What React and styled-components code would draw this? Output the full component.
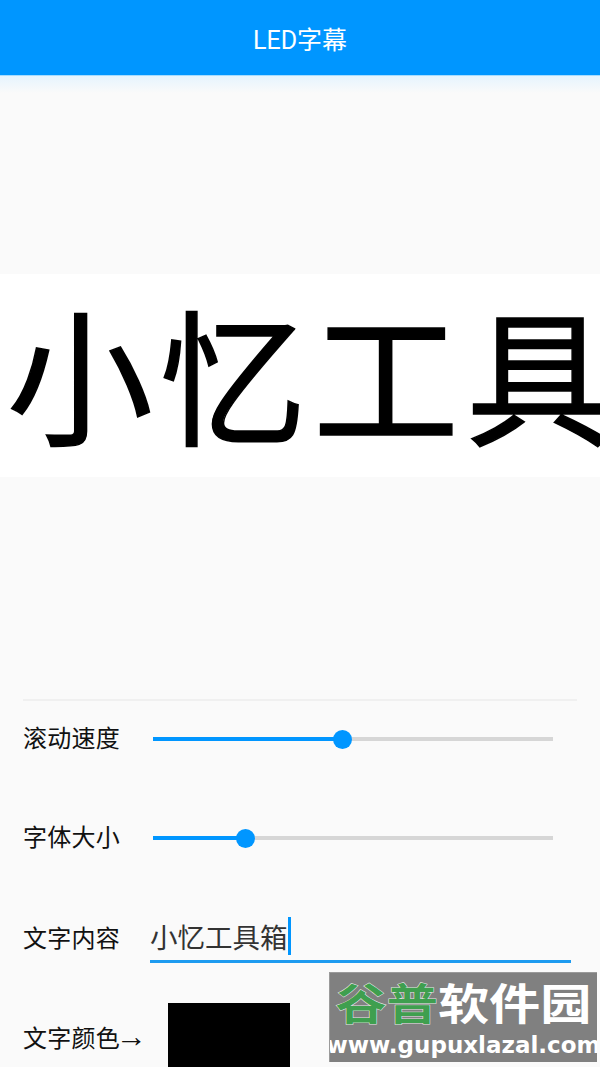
import React from 'react';
import styled, { createGlobalStyle } from 'styled-components';

const CJK = `"Noto Sans CJK SC", "Noto Sans", sans-serif`;
const BLUE = '#0096ff';

const GlobalStyle = createGlobalStyle`
  html, body {
    margin: 0;
    padding: 0;
    background: #fafafa;
  }
  * {
    box-sizing: border-box;
  }
`;

const Page = styled.div`
  position: relative;
  width: 600px;
  height: 1067px;
  overflow: hidden;
  background: #fafafa;
  font-family: ${CJK};
`;

const Header = styled.header`
  height: 75px;
  display: flex;
  align-items: center;
  justify-content: center;
  background: ${BLUE};
  color: #fff;
  font-family: Roboto, ${CJK};
  font-size: 25px;
`;

const HeaderShadow = styled.div`
  height: 18px;
  margin-bottom: 181px;
  border-top: 1px solid #a6dcff;
  background: linear-gradient(#e6f4fe, #fafafa);
`;

const Banner = styled.div`
  height: 203px;
  display: flex;
  align-items: center;
  padding: 0 0 10px 7px;
  overflow: hidden;
  background: #fff;
  color: #000;
  font-size: 146px;
  letter-spacing: 7px;
  line-height: 193px;
  white-space: nowrap;
  -webkit-text-stroke: 1.5px #000;
`;

const Controls = styled.section`
  margin: 222px 23px 0;
  border-top: 2px solid #f0f0f0;
`;

const Row = styled.div`
  height: ${props => props.$height}px;
  display: flex;
  align-items: center;
`;

const Label = styled.span`
  width: ${props => props.$width || 130}px;
  flex: none;
  padding-bottom: 5px;
  color: #111;
  font-size: 24px;
  letter-spacing: 0.25px;
  white-space: nowrap;
`;

const Arrow = styled.span`
  margin-left: -4px;
  font-family: "Liberation Sans", sans-serif;
  font-size: 31px;
  line-height: 0;
  letter-spacing: 0;
`;

const Track = styled.div`
  position: relative;
  width: 400px;
  height: 4px;
  background: #d6d6d6;
`;

const Fill = styled.div`
  height: 100%;
  background: ${BLUE};
`;

const Thumb = styled.div`
  position: absolute;
  top: -7.5px;
  width: 19px;
  height: 19px;
  margin-left: -9.5px;
  border-radius: 50%;
  background: ${BLUE};
`;

const TextField = styled.div`
  width: 421px;
  height: 48px;
  margin-left: -3px;
  padding-bottom: 3px;
  display: flex;
  align-items: center;
  border-bottom: 3px solid #1e9bf0;
  color: #333;
  font-size: 27.5px;
  white-space: nowrap;
`;

const Caret = styled.span`
  width: 3px;
  height: 38px;
  background: ${BLUE};
`;

const Swatch = styled.div`
  width: 122px;
  height: 100px;
  margin-top: 24px;
  align-self: flex-start;
  background: #000;
`;

const Watermark = styled.div`
  position: absolute;
  left: 329px;
  top: 972px;
  width: 268px;
  height: 90px;
  display: flex;
  flex-direction: column;
  align-items: center;
  background: #808080;
  border-top: 1px solid #9a9a9a;
  border-left: 1px solid #9a9a9a;
  overflow: hidden;
`;

const WatermarkTitle = styled.div`
  height: 56px;
  display: flex;
  align-items: center;
  font-size: 43px;
  font-weight: 700;
  line-height: 56px;
  white-space: nowrap;
  color: #fff;
  transform: scaleX(1.19);
`;

const Green = styled.span`
  color: #3f9f4f;
  -webkit-text-stroke: 1px #e4e4e4;
  paint-order: stroke fill;
`;

const WatermarkUrl = styled.div`
  margin-top: 1px;
  font-family: "DejaVu Sans", sans-serif;
  font-size: 23px;
  font-weight: 700;
  line-height: 30px;
  color: #fff;
  white-space: nowrap;
`;

const Slider = ({ value }) => (
  <Track>
    <Fill style={{ width: `${value}%` }} />
    <Thumb style={{ left: `${value}%` }} />
  </Track>
);

const App = () => (
  <>
    <GlobalStyle />
    <Page>
      <Header>LED字幕</Header>
      <HeaderShadow />
      <Banner>小忆工具箱</Banner>
      <Controls>
        <Row $height={76}>
          <Label>滚动速度</Label>
          <Slider value={47.25} />
        </Row>
        <Row $height={122}>
          <Label>字体大小</Label>
          <Slider value={23} />
        </Row>
        <Row $height={80}>
          <Label>文字内容</Label>
          <TextField>
            小忆工具箱
            <Caret />
          </TextField>
        </Row>
        <Row $height={120}>
          <Label $width={145}>文字颜色<Arrow>→</Arrow></Label>
          <Swatch />
        </Row>
      </Controls>
      <Watermark>
        <WatermarkTitle>
          <Green>谷普</Green>软件园
        </WatermarkTitle>
        <WatermarkUrl>www.gupuxlazal.com</WatermarkUrl>
      </Watermark>
    </Page>
  </>
);

export default App;
